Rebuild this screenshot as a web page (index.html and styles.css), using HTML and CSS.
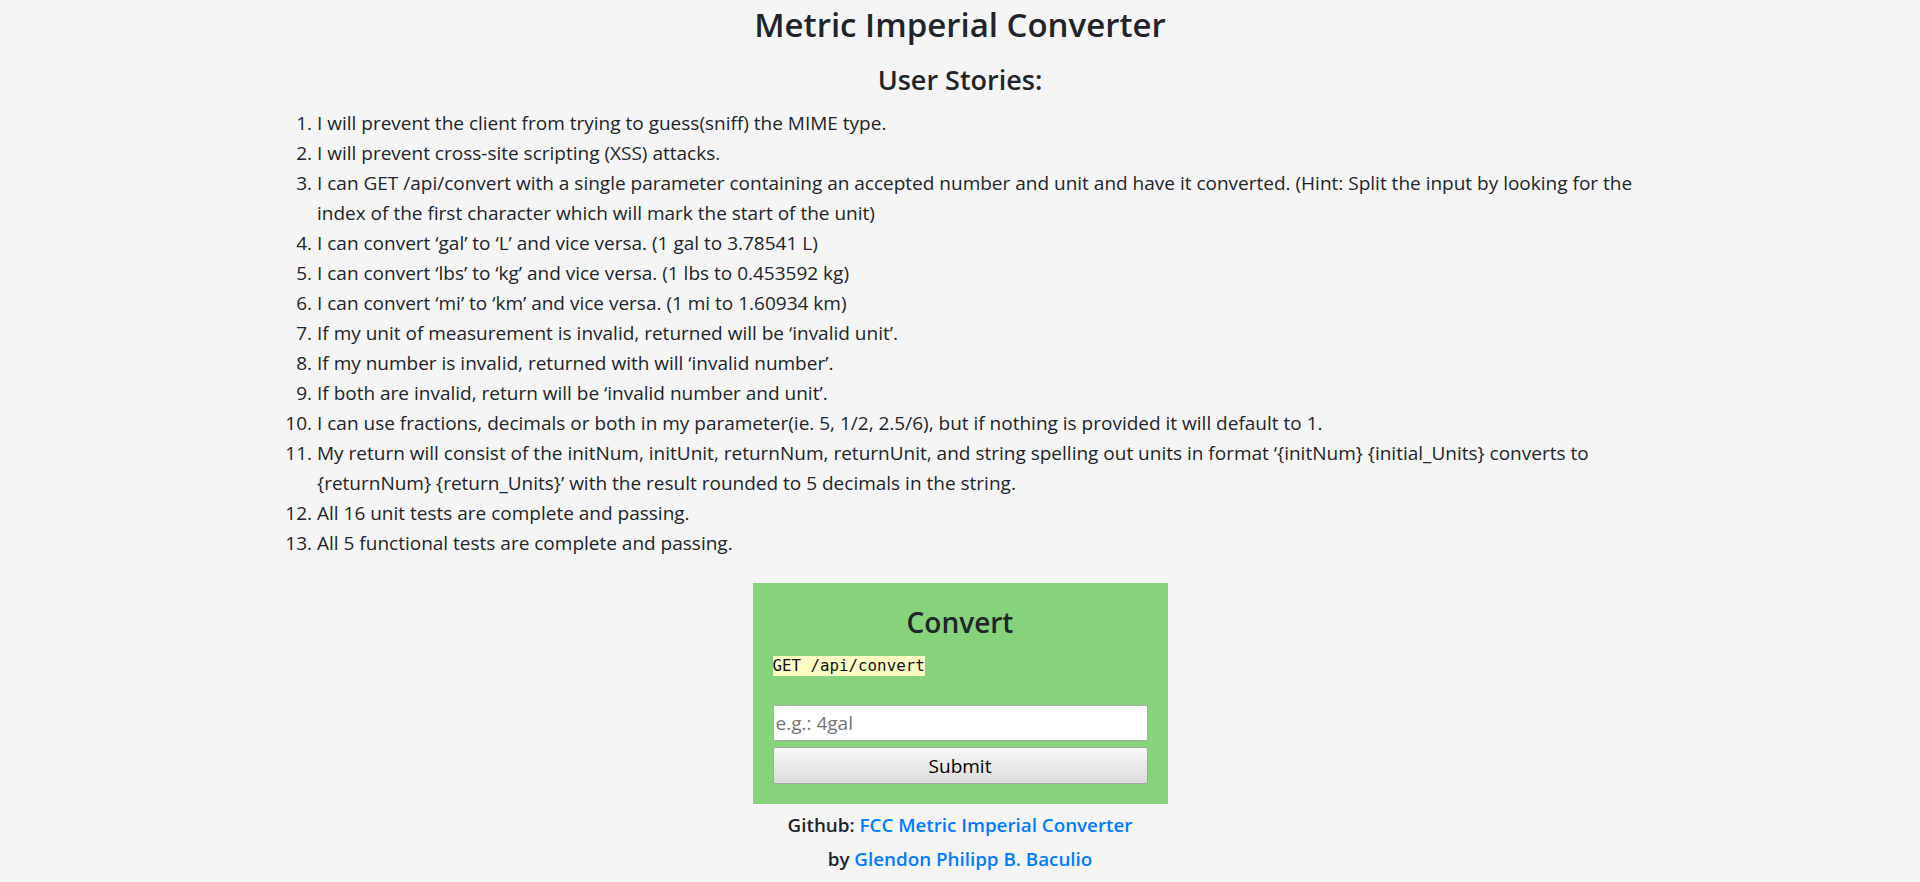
FILE: index.html
```html
<!DOCTYPE html>
<html lang="en">
<head>
<meta charset="utf-8">
<title>Metric Imperial Converter</title>
<link rel="stylesheet" href="styles.css">
</head>
<body>
  <header class="page-header">
    <h1 class="title">Metric Imperial Converter</h1>
  </header>
  <section class="stories">
    <h2 class="stories-title">User Stories:</h2>
    <ol class="story-list">
      <li>I will prevent the client from trying to guess(sniff) the MIME type.</li>
      <li>I will prevent cross-site scripting (XSS) attacks.</li>
      <li>I can GET /api/convert with a single parameter containing an accepted number and unit and have it converted. (Hint: Split the input by looking for the index of the first character which will mark the start of the unit)</li>
      <li>I can convert ‘gal’ to ‘L’ and vice versa. (1 gal to 3.78541 L)</li>
      <li>I can convert ‘lbs’ to ‘kg’ and vice versa. (1 lbs to 0.453592 kg)</li>
      <li>I can convert ‘mi’ to ‘km’ and vice versa. (1 mi to 1.60934 km)</li>
      <li>If my unit of measurement is invalid, returned will be ‘invalid unit’.</li>
      <li>If my number is invalid, returned with will ‘invalid number’.</li>
      <li>If both are invalid, return will be ‘invalid number and unit’.</li>
      <li>I can use fractions, decimals or both in my parameter(ie. 5, 1/2, 2.5/6), but if nothing is provided it will default to 1.</li>
      <li>My return will consist of the initNum, initUnit, returnNum, returnUnit, and string spelling out units in format ‘{initNum} {initial_Units} converts to {returnNum} {return_Units}’ with the result rounded to 5 decimals in the string.</li>
      <li>All 16 unit tests are complete and passing.</li>
      <li>All 5 functional tests are complete and passing.</li>
    </ol>
  </section>
  <main class="converter">
    <h3 class="converter-title">Convert</h3>
    <code class="endpoint">GET /api/convert</code>
    <form class="convert-form">
      <input class="convert-input" type="text" placeholder="e.g.: 4gal">
      <button class="convert-btn" type="button">Submit</button>
    </form>
  </main>
  <footer class="page-footer">
    <p class="credit">Github: <a class="credit-link" href="#">FCC Metric Imperial Converter</a></p>
    <p class="credit credit-by">by <a class="credit-link" href="#">Glendon Philipp B. Baculio</a></p>
  </footer>
</body>
</html>
```

FILE: styles.css
```css
* { box-sizing: border-box; }

html, body {
  margin: 0;
  padding: 0;
}

body {
  background: #f5f5f5;
  color: #212529;
  font-family: "Open Sans", "Noto Sans", sans-serif;
  font-size: 19px;
  line-height: 30px;
  padding-top: 3px;
}

.page-header {
  text-align: center;
}

.title {
  margin: 0;
  font-size: 33px;
  line-height: 44px;
  font-weight: 600;
}

.stories {
  display: flex;
  flex-direction: column;
  align-items: center;
}

.stories-title {
  margin: 16px 0 0;
  font-size: 27px;
  line-height: 34px;
  font-weight: 600;
}

.story-list {
  width: 1366px;
  margin: 11px 0 0;
  padding-left: 40px;
  font-size: 19px;
  line-height: 30px;
}

.converter {
  width: 415px;
  margin: 25px auto 0;
  padding: 20px;
  background: #87d37c;
  display: flex;
  flex-direction: column;
  align-items: flex-start;
}

.converter-title {
  align-self: stretch;
  text-align: center;
  margin: 0;
  font-size: 28px;
  line-height: 38px;
  font-weight: 600;
}

.endpoint {
  margin-top: 15px;
  display: inline-block;
  height: 20px;
  line-height: 20px;
  font-family: "DejaVu Sans Mono", "Liberation Mono", monospace;
  font-size: 15.8px;
  background: #fdfcc2;
  color: #111;
}

.convert-form {
  align-self: stretch;
  margin-top: 29px;
  display: flex;
  flex-direction: column;
  gap: 6px;
}

.convert-input {
  height: 36px;
  width: 100%;
  border: 1px solid #aaaaaa;
  border-radius: 2px;
  background: #fff;
  padding: 0 2px;
  font-family: "Open Sans", "Noto Sans", sans-serif;
  font-size: 19px;
  color: #212529;
}

.convert-input::placeholder {
  color: #757575;
}

.convert-btn {
  height: 37px;
  width: 100%;
  border: 1px solid #a6a6a6;
  border-radius: 2px;
  background: linear-gradient(#f8f8f8, #dcdcdc);
  font-family: "Open Sans", "Noto Sans", sans-serif;
  font-size: 19px;
  color: #000;
  padding: 0;
}

.page-footer {
  margin-top: 9px;
  text-align: center;
}

.credit {
  margin: 0;
  font-size: 18.8px;
  line-height: 24px;
  font-weight: 600;
}

.credit-by {
  margin-top: 10px;
}

.credit-link {
  color: #007bff;
  text-decoration: none;
}
```
